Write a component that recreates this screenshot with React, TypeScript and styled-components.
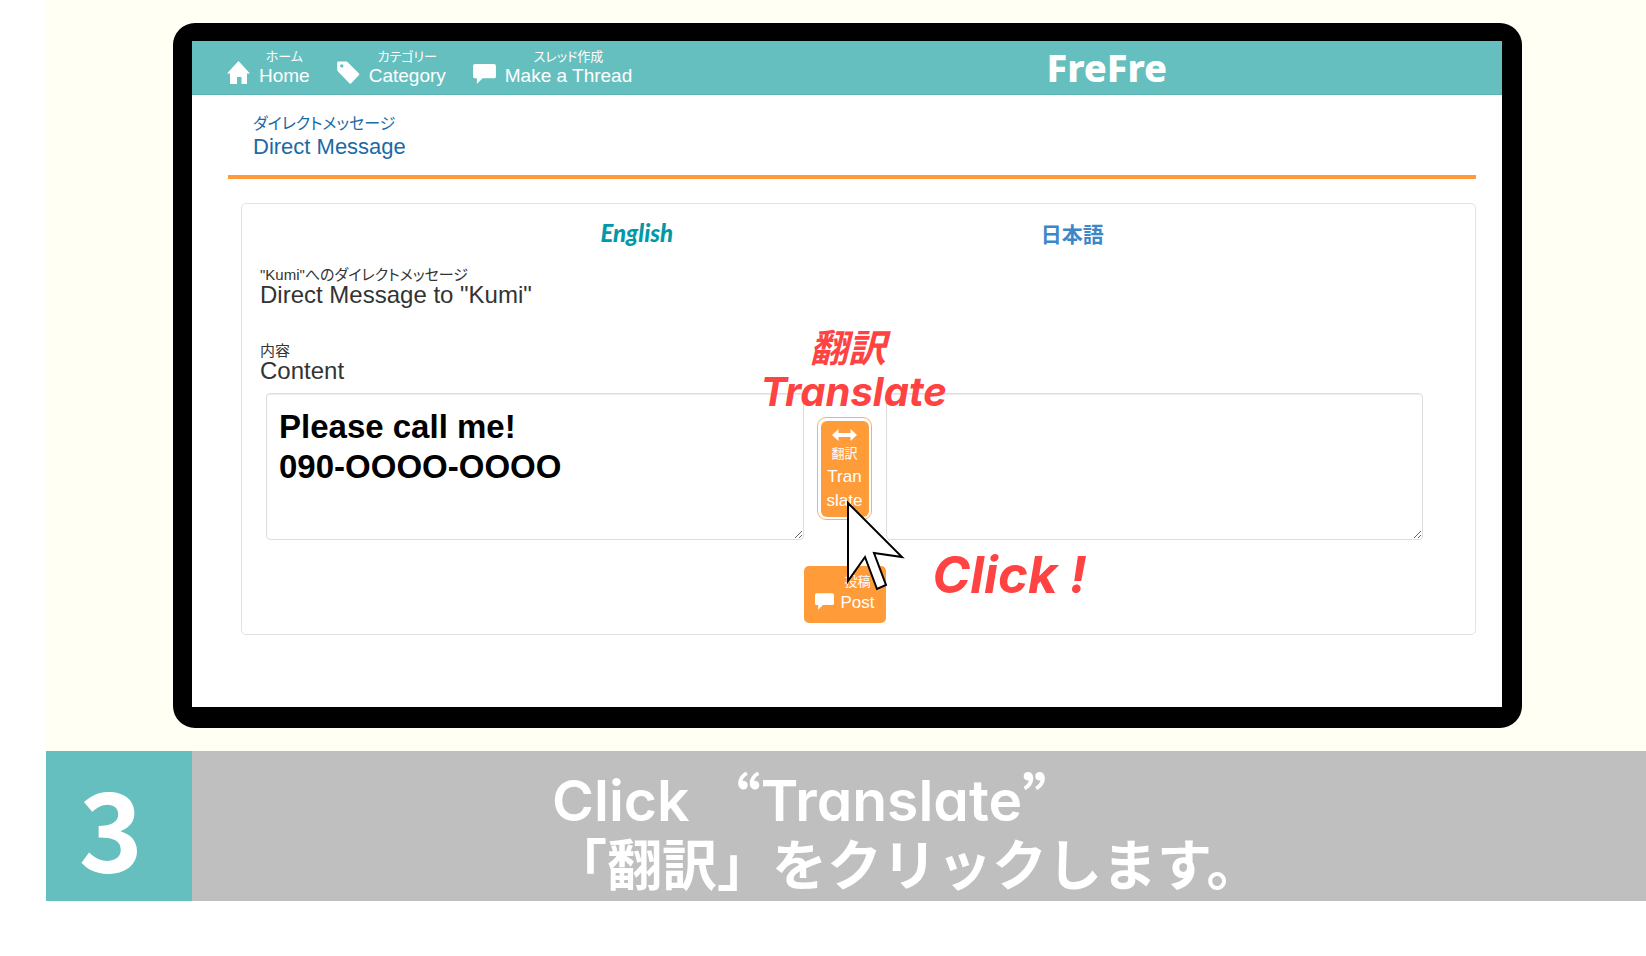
import React from "react";
import styled, { createGlobalStyle } from "styled-components";

const sans = `"Liberation Sans", "Noto Sans CJK JP", Arial, sans-serif`;
const rounded = `Inter, "Noto Sans CJK JP", sans-serif`;
const teal = "#66bfbf";
const orange = "#ff9c39";

const GlobalStyle = createGlobalStyle`
  * { box-sizing: border-box; }
  body { margin: 0; background: #fff; font-family: ${sans}; }
`;

const Slide = styled.main`
  margin-left: 46px;
`;

const Stage = styled.section`
  padding: 23px 124px 23px 127px;
  background: #fffff3;
`;

const Monitor = styled.div`
  border: solid #000;
  border-width: 18px 20px 21px 19px;
  border-radius: 22px;
  background: #000;
`;

const Screen = styled.div`
  background: #fff;
  padding-bottom: 72px;
`;

const Header = styled.header`
  display: grid;
  grid-template-columns: 65% 1fr;
  height: 54px;
  background: ${teal};
  border-bottom: 1px solid #5bb5b5;
`;

const Nav = styled.nav`
  display: flex;
  gap: 27px;
  padding: 8px 0 0 35px;
`;

const NavLink = styled.a`
  display: flex;
  align-items: flex-end;
  gap: 9px;
  height: 38px;
  color: #fff;
  text-decoration: none;
  white-space: nowrap;

  svg { margin-bottom: 3px; }
`;

const NavText = styled.span`
  display: flex;
  flex-direction: column;
  align-items: center;
  height: 38px;
  font-size: 19px;
  line-height: 22px;
`;

const Kana = styled.small<{ $size: number; $line: number }>`
  display: block;
  font-size: ${(p) => p.$size}px;
  line-height: ${(p) => p.$line}px;
  font-weight: 400;
  font-feature-settings: "palt";
`;

const Logo = styled.a`
  padding-left: 3px;
  color: #fff;
  font: 800 38px/52px "Noto Sans", sans-serif;
  text-decoration: none;
`;

const Body = styled.div`
  padding: 0 26px 0 36px;
`;

const PageTitle = styled.h1`
  margin: 0 0 24px;
  padding: 18px 0 15px 25px;
  border-bottom: 4px solid ${orange};
  color: #1a6aa5;
  font-size: 22px;
  line-height: 26px;
  font-weight: 400;
`;

const Panel = styled.form`
  margin-left: 13px;
  padding: 15px 0 11px;
  border: 1px solid #e2e2e2;
  border-radius: 5px;
  color: #333;
`;

const Languages = styled.div`
  display: grid;
  grid-template-columns: 1fr 1fr;
  padding: 0 185px 0 177px;
  margin-bottom: 20px;
  text-align: center;
  line-height: 28px;
`;

const LanguageCell = styled.div`
  height: 28px;
`;

const Language = styled.a<{ $active?: boolean }>`
  color: ${(p) => (p.$active ? "#0099a8" : "#3d87c9")};
  font-family: ${(p) => (p.$active ? "Lato, sans-serif" : `"Noto Sans CJK JP", sans-serif`)};
  font-size: ${(p) => (p.$active ? 24 : 21)}px;
  font-weight: ${(p) => (p.$active ? 900 : 700)};
  font-style: ${(p) => (p.$active ? "italic" : "normal")};
  text-decoration: none;
`;

const Recipient = styled.h2`
  margin: 0 0 36px 18px;
  font-size: 24px;
  line-height: 24px;
  font-weight: 400;
`;

const FieldLabel = styled.label`
  display: block;
  margin: 0 0 10px 18px;
  font-size: 24px;
  line-height: 24px;
`;

const Editor = styled.div`
  display: grid;
  grid-template-columns: 1fr 82px 1fr;
  margin: 0 52px 0 24px;
`;

const TextArea = styled.textarea`
  display: block;
  width: 100%;
  height: 147px;
  padding: 13px 12px;
  border: 1px solid #dedede;
  border-radius: 4px;
  box-shadow: inset 0 1px 1px rgba(0, 0, 0, 0.08);
  outline: none;
  background: #fff;
  color: #000;
  font: 700 33px/40px ${sans};
`;

const Middle = styled.div`
  position: relative;
  display: flex;
  justify-content: center;
  align-items: flex-start;
  padding-top: 24px;
`;

const Button = styled.button`
  border: 0;
  background: ${orange};
  color: #fff;
  font-family: ${sans};
  font-size: 17px;
  line-height: 24px;
  text-align: center;
`;

const TranslateButton = styled(Button)`
  display: flex;
  align-items: center;
  justify-content: center;
  width: 55px;
  height: 103px;
  padding: 0;
  border: 1px solid #ffb060;
  border-radius: 9px;
  background: #fff;
`;

const ButtonFace = styled.span`
  display: block;
  width: 48px;
  height: 96px;
  padding-top: 6px;
  border-radius: 6px;
  background: ${orange};

  svg { display: block; margin: 0 auto; }
`;

const PostRow = styled.div`
  display: flex;
  justify-content: center;
  margin: 26px 52px 0 24px;
`;

const PostButton = styled(Button)`
  display: flex;
  align-items: flex-end;
  gap: 7px;
  width: 82px;
  height: 57px;
  padding: 0 10px 8px 11px;
  border-radius: 5px;

  svg { margin-bottom: 5px; }
`;

const Callout = styled.div<{ $size: number; $left: number; $top: number }>`
  position: absolute;
  left: ${(p) => p.$left}px;
  top: ${(p) => p.$top}px;
  color: #ff4242;
  font-family: ${rounded};
  font-size: ${(p) => p.$size}px;
  line-height: 44px;
  font-weight: 700;
  font-style: italic;
  font-feature-settings: "cv11";
  text-align: center;
  white-space: nowrap;
  pointer-events: none;
`;

const CalloutKanji = styled.span`
  display: block;
  padding-right: 12px;
  font-size: 38px;
`;

const Pointer = styled.svg`
  position: absolute;
  left: 42px;
  top: 106px;
  z-index: 1;
  pointer-events: none;
`;

const Step = styled.section`
  display: flex;
  min-height: 150px;
  background: #bfbfbf;
  color: #fff;
`;

const StepNumber = styled.div`
  width: 146px;
  padding-right: 16px;
  background: ${teal};
  text-align: center;
  font: 700 109px/148px "Noto Sans CJK JP", sans-serif;
`;

const Caption = styled.p`
  margin: 0;
  padding: 13px 0 0 360px;
  font-family: ${rounded};
  line-height: 65px;
  font-weight: 600;
  font-feature-settings: "cv11";
`;

const CaptionLine = styled.span<{ $size: number }>`
  display: block;
  font-size: ${(p) => p.$size}px;
`;

const WideQuote = styled.span`
  font-family: "Noto Sans CJK SC", sans-serif;
`;

const HomeIcon = () => (
  <svg width="23" height="23" viewBox="0 0 23 23" fill="#fff" aria-hidden="true">
    <path d="M11.500 0 23 12.500h-3V23h-5.500v-7h-4.500v7H3V12.500H0Z" />
  </svg>
);

const TagIcon = () => (
  <svg width="23" height="23" viewBox="0 0 23 23" fill="#fff" aria-hidden="true">
    <path
      fillRule="evenodd"
      d="M1.200.500H9q1.200 0 2 .9L22 12.500q.6.700 0 1.400L14 22.500q-.7.700-1.400 0L1 10.500q-.8-.8-.8-2V1.500Q.2.500 1.200.500ZM4.800 3.200a1.700 1.700 0 1 0 0 3.400 1.700 1.700 0 0 0 0-3.400Z"
    />
  </svg>
);

const CommentIcon = ({ width = 23 }: { width?: number }) => (
  <svg width={width} height={Math.round(width * 0.88)} viewBox="0 0 24 21" fill="#fff" aria-hidden="true">
    <path d="M2 0h20q2 0 2 2v11q0 2-2 2H10l-6 6v-6H2q-2 0-2-2V2Q0 0 2 0Z" />
  </svg>
);

const ArrowsIcon = () => (
  <svg width="25" height="16" viewBox="0 0 25 16" fill="#fff" aria-hidden="true">
    <path d="M0 8 6.500 2v4h12V2L25 8l-6.500 6v-4h-12v4Z" />
  </svg>
);

export default function App() {
  return (
    <>
      <GlobalStyle />
      <Slide>
        <Stage>
          <Monitor>
            <Screen>
              <Header>
                <Nav>
                  <NavLink href="#home">
                    <HomeIcon />
                    <NavText>
                      <Kana $size={13} $line={16}>ホーム</Kana>
                      Home
                    </NavText>
                  </NavLink>
                  <NavLink href="#category">
                    <TagIcon />
                    <NavText>
                      <Kana $size={13} $line={16}>カテゴリー</Kana>
                      Category
                    </NavText>
                  </NavLink>
                  <NavLink href="#thread">
                    <CommentIcon />
                    <NavText>
                      <Kana $size={13} $line={16}>スレッド作成</Kana>
                      Make a Thread
                    </NavText>
                  </NavLink>
                </Nav>
                <Logo href="#top">FreFre</Logo>
              </Header>
              <Body>
                <PageTitle>
                  <Kana $size={16} $line={21}>ダイレクトメッセージ</Kana>
                  Direct Message
                </PageTitle>
                <Panel onSubmit={(e) => e.preventDefault()}>
                  <Languages>
                    <LanguageCell><Language $active href="#en">English</Language></LanguageCell>
                    <LanguageCell><Language href="#ja">日本語</Language></LanguageCell>
                  </Languages>
                  <Recipient>
                    <Kana $size={15} $line={16}>"Kumi"へのダイレクトメッセージ</Kana>
                    Direct Message to "Kumi"
                  </Recipient>
                  <FieldLabel htmlFor="content">
                    <Kana $size={15} $line={16}>内容</Kana>
                    Content
                  </FieldLabel>
                  <Editor>
                    <TextArea id="content" spellCheck={false} defaultValue={"Please call me!\n090-OOOO-OOOO"} />
                    <Middle>
                      <TranslateButton type="button">
                        <ButtonFace>
                          <ArrowsIcon />
                          <Kana $size={13} $line={22}>翻訳</Kana>
                          Tran
                          <br />
                          slate
                        </ButtonFace>
                      </TranslateButton>
                      <Callout $size={40} $left={-43} $top={-67}>
                        <CalloutKanji>翻訳</CalloutKanji>
                        Translate
                      </Callout>
                      <Pointer width="60" height="96" viewBox="0 0 60 96" aria-hidden="true">
                        <path
                          d="M2 4V82L19 58 31 90 40 86 28 54 56 58Z"
                          fill="#fff"
                          stroke="#000"
                          strokeWidth="2"
                        />
                      </Pointer>
                      <Callout $size={51} $left={129} $top={160}>Click !</Callout>
                    </Middle>
                    <TextArea aria-label="Translation" spellCheck={false} />
                  </Editor>
                  <PostRow>
                    <PostButton type="submit">
                      <CommentIcon width={19} />
                      <span>
                        <Kana $size={13} $line={18}>投稿</Kana>
                        Post
                      </span>
                    </PostButton>
                  </PostRow>
                </Panel>
              </Body>
            </Screen>
          </Monitor>
        </Stage>
        <Step>
          <StepNumber>3</StepNumber>
          <Caption>
            <CaptionLine $size={57}>
              Click <WideQuote lang="zh">“</WideQuote>Translate<WideQuote lang="zh">”</WideQuote>
            </CaptionLine>
            <CaptionLine $size={55}>「翻訳」をクリックします。</CaptionLine>
          </Caption>
        </Step>
      </Slide>
    </>
  );
}
